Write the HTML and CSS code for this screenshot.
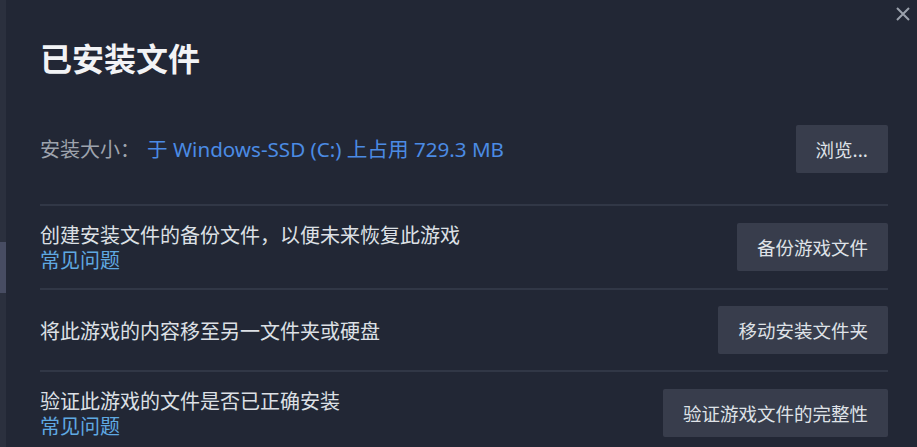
FILE: index.html
```html
<!DOCTYPE html>
<html lang="zh-CN">
<head>
<meta charset="utf-8">
<title>已安装文件</title>
<link rel="stylesheet" href="styles.css">
</head>
<body>
<div class="app">
  <div class="rail"><div class="thumb"></div></div>
  <div class="dialog">
    <button class="close" aria-label="关闭">
      <svg width="16" height="16" viewBox="0 0 16 16"><path d="M2 2 L14 14 M14 2 L2 14" stroke="#9ba1ac" stroke-width="2" fill="none"/></svg>
    </button>
    <h1 class="title">已安装文件</h1>
    <div class="row first">
      <div class="info">
        <span class="label">安装大小：</span><span class="value">于 Windows-SSD (C:) 上占用 729.3 MB</span>
      </div>
      <button class="btn">浏览...</button>
    </div>
    <div class="row">
      <div class="text">
        <div>创建安装文件的备份文件，以便未来恢复此游戏</div>
        <a class="link">常见问题</a>
      </div>
      <button class="btn">备份游戏文件</button>
    </div>
    <div class="row">
      <div class="text">
        <div>将此游戏的内容移至另一文件夹或硬盘</div>
      </div>
      <button class="btn">移动安装文件夹</button>
    </div>
    <div class="row">
      <div class="text">
        <div>验证此游戏的文件是否已正确安装</div>
        <a class="link">常见问题</a>
      </div>
      <button class="btn">验证游戏文件的完整性</button>
    </div>
  </div>
</div>
</body>
</html>
```

FILE: styles.css
```css
* { box-sizing: border-box; }
html, body {
  margin: 0;
  height: 100%;
  background: #222735;
  overflow: hidden;
}
body {
  font-family: "Noto Sans", "Noto Sans CJK SC", sans-serif;
  color: #dfe2e7;
}
.app {
  display: flex;
  height: 100%;
}
.rail {
  width: 6px;
  flex: none;
  background: #2b303e;
  padding-top: 242px;
}
.thumb {
  height: 51px;
  background: #474c62;
}
.dialog {
  flex: 1;
  position: relative;
  padding: 37px 29px 0 34px;
}
.close {
  position: absolute;
  top: 6px;
  right: 6px;
  background: none;
  border: 0;
  padding: 0;
  width: 16px;
  height: 16px;
  cursor: pointer;
}
.close svg { display: block; }
.title {
  margin: 0 0 48px;
  font-family: "Noto Sans CJK SC", sans-serif;
  font-size: 32px;
  line-height: 40px;
  font-weight: 700;
  color: #f2f3f5;
}
.row {
  display: flex;
  align-items: center;
  justify-content: space-between;
  border-top: 2px solid #313746;
  padding: 16px 0;
}
.row.first {
  border-top: 0;
  padding: 0 0 31px;
}
.info {
  font-size: 20px;
  line-height: 25px;
}
.label {
  font-family: "Noto Sans CJK SC", sans-serif;
  color: #9ea3ad;
  margin-right: 7px;
}
.value {
  color: #4b8be4;
  font-size: 20.6px;
  font-family: "Noto Sans", "Noto Sans CJK SC", sans-serif;
}
.text {
  font-family: "Noto Sans CJK SC", sans-serif;
  font-size: 20px;
  line-height: 25px;
  color: #dde0e5;
}
.link {
  display: block;
  color: #5fa9e2;
  cursor: pointer;
}
.btn {
  height: 48px;
  padding: 0 20px;
  background: #383d4c;
  border: 0;
  border-radius: 2px;
  color: #dfe2e7;
  font-family: "Noto Sans CJK SC", sans-serif;
  font-size: 18.5px;
  cursor: pointer;
  white-space: nowrap;
}
```
